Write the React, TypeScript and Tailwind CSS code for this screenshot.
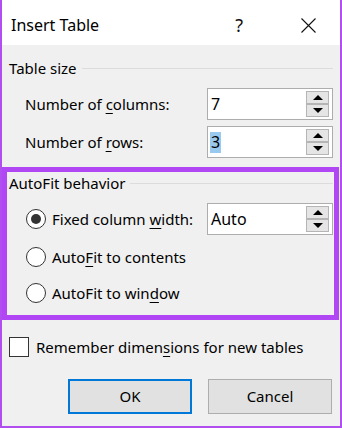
import React from 'react';

const font = { fontFamily: '"Noto Sans", "Open Sans", sans-serif' };

const U: React.FC<{ children: React.ReactNode }> = ({ children }) => (
  <span className="underline underline-offset-[3px] decoration-1">{children}</span>
);

const Spinner: React.FC = () => (
  <div className="flex flex-col w-[23px] h-[26px] mr-[3px]">
    {['up', 'down'].map((d) => (
      <div key={d} className="flex-1 flex items-center justify-center bg-[#e5e5e5] border border-[#b5b5b5]">
        <svg width="10" height="6" viewBox="0 0 10 6">
          {d === 'up' ? <polygon points="0,5 10,5 5,0" fill="#000" /> : <polygon points="0,0 10,0 5,5" fill="#000" />}
        </svg>
      </div>
    ))}
  </div>
);

const SpinBox: React.FC<{ value: string; selected?: boolean }> = ({ value, selected }) => (
  <div className="w-[126px] h-[32px] bg-white border border-[#adadad] flex items-center justify-between">
    <span className={`ml-[2px] px-[1px] text-[16px] leading-[21px] text-black ${selected ? 'bg-[#99c9ef]' : ''}`}>{value}</span>
    <Spinner />
  </div>
);

const Radio: React.FC<{ checked?: boolean }> = ({ checked }) => (
  <div className="w-[20px] h-[20px] rounded-full border border-[#333] bg-white flex items-center justify-center">
    {checked && <div className="w-[10px] h-[10px] rounded-full bg-[#333]" />}
  </div>
);

const GroupLabel: React.FC<{ text: string }> = ({ text }) => (
  <div className="flex items-center h-[20px]">
    <span className="text-[15px] text-black leading-[20px]">{text}</span>
    <div className="flex-1 h-px bg-[#dcdcdc] ml-[5px]" />
  </div>
);

export default function App() {
  return (
    <div style={font} className="w-[342px] h-[428px] border-x-2 border-b-2 border-[#b14ef0] bg-[#f0f0f0] flex flex-col overflow-hidden">
      {/* title bar */}
      <div className="h-[45px] bg-white flex items-center shrink-0 pt-[5px]">
        <span className="ml-[9px] text-[16px] text-black">Insert Table</span>
        <span className="ml-auto mr-[58px] text-[18px] text-[#111]">?</span>
        <svg className="mr-[24px]" width="15" height="15" viewBox="0 0 15 15">
          <path d="M0.5 0.5 L14.5 14.5 M14.5 0.5 L0.5 14.5" stroke="#111" strokeWidth="1.1" />
        </svg>
      </div>

      {/* table size */}
      <div className="h-[122px] shrink-0 flex flex-col pl-[7px] pr-[7px]">
        <div className="mt-[13px]">
          <GroupLabel text="Table size" />
        </div>
        <div className="mt-[10px] flex items-center h-[32px]">
          <span className="ml-[16px] text-[15px] text-black">Number of <U>c</U>olumns:</span>
          <div className="ml-auto"><SpinBox value="7" /></div>
        </div>
        <div className="mt-[6px] flex items-center h-[32px]">
          <span className="ml-[16px] text-[15px] text-black">Number of <U>r</U>ows:</span>
          <div className="ml-auto"><SpinBox value="3" selected /></div>
        </div>
      </div>

      {/* autofit */}
      <div className="w-[337px] h-[153px] shrink-0 border-[5px] border-[#b146f5] flex flex-col pl-[2px] pr-[1px]">
        <div className="mt-[1px]">
          <GroupLabel text="AutoFit behavior" />
        </div>
        <div className="mt-[10px] h-[32px] flex items-center">
          <div className="ml-[17px]"><Radio checked /></div>
          <span className="ml-[6px] text-[15px] text-black">Fixed column <U>w</U>idth:</span>
          <div className="ml-auto"><SpinBox value="Auto" /></div>
        </div>
        <div className="mt-[10px] h-[24px] flex items-center">
          <div className="ml-[17px]"><Radio /></div>
          <span className="ml-[6px] text-[15px] text-black">Auto<U>F</U>it to contents</span>
        </div>
        <div className="mt-[12px] h-[24px] flex items-center">
          <div className="ml-[17px]"><Radio /></div>
          <span className="ml-[6px] text-[15px] text-black">AutoFit to win<U>d</U>ow</span>
        </div>
      </div>

      {/* remember */}
      <div className="mt-[17px] h-[20px] flex items-center pl-[7px] shrink-0">
        <div className="w-[20px] h-[20px] border border-[#333] bg-white" />
        <span className="ml-[7px] text-[15px] text-black">Remember dimen<U>s</U>ions for new tables</span>
      </div>

      {/* buttons */}
      <div className="mt-[22px] flex justify-end gap-[16px] pr-[8px] shrink-0">
        <button className="w-[124px] h-[35px] bg-[#e1e1e1] border-2 border-[#0078d7] text-[15px] text-black">OK</button>
        <button className="w-[124px] h-[35px] bg-[#e1e1e1] border border-[#adadad] text-[15px] text-black">Cancel</button>
      </div>
    </div>
  );
}
